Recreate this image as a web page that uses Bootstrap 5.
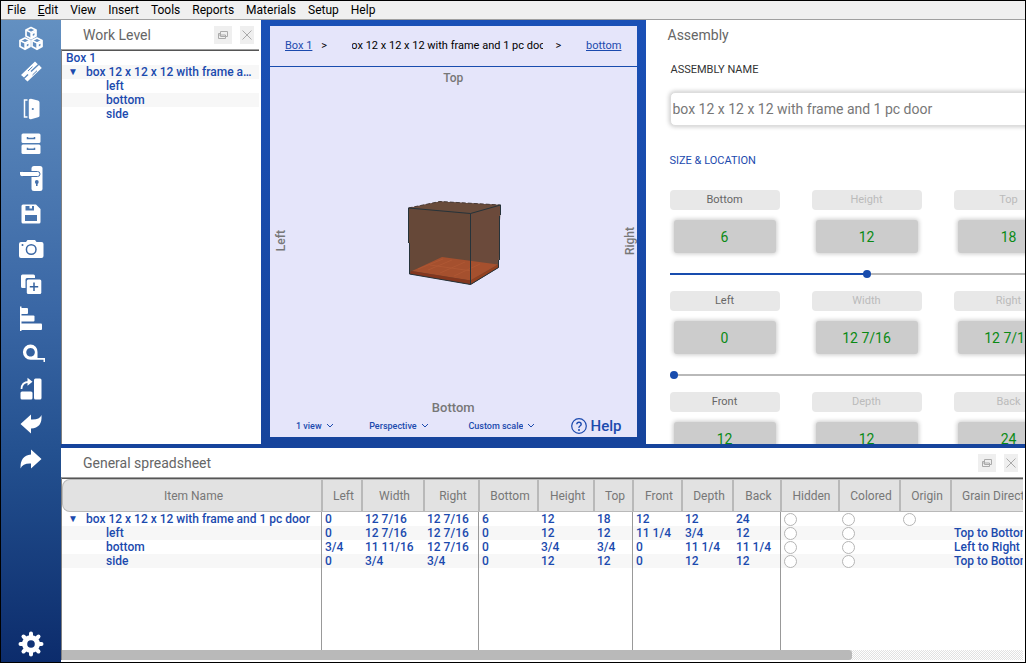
<!DOCTYPE html>
<html lang="en">
<head>
<meta charset="utf-8">
<meta name="viewport" content="width=device-width, initial-scale=1">
<title>Cabinet designer</title>
<link href="https://cdn.jsdelivr.net/npm/bootstrap@5.3.0/dist/css/bootstrap.min.css" rel="stylesheet">
<script src="https://cdn.jsdelivr.net/npm/bootstrap@5.3.0/dist/js/bootstrap.bundle.min.js" defer></script>
<style>
:root{--blue:#184cae;--ink:#1b4aae;--lav:#e5e5fa}
body{font-family:Roboto,"Liberation Sans",sans-serif;font-size:12px;line-height:14px;color:#000;border:1px solid #000;background:#fff}
button{border:0;padding:0;background:none}
.menubar{background:#f0f0f0;border-bottom:1px solid #a0a0a0;height:19px}
.menubar a{color:#000;text-decoration:none;padding:2px 6px}
.toolbar{width:60px;flex:none;background:linear-gradient(#6390c1,#3a67a5 45%,#23508f 68%,#0c2c6c);padding:0 1px 1px 0}
.toolbar button{height:35px}
.toolbar svg{width:24px;height:24px;overflow:visible;fill:#fff;display:block}
.upper{flex:1 1 0;min-height:0;border-bottom:4px solid #16449c}
.lower{flex:0 0 33.333%;min-height:0}
.panel-head{height:29px;padding:0 7px 0 22px;color:#666;flex:none}
.panel-head h2,.assembly h2{font-size:14px;line-height:18px;font-weight:400;margin:0;color:#666}
.panel-head button{background:#efefef;height:18px;color:#aaa}
.panel-head svg{fill:none;stroke:currentColor;display:block;margin:auto}
.bfloat{width:18px}.bclose{width:14px}
.sunken{border-top:1px solid #a0a0a0;border-left:1px solid #808080}
.sunken>div{border-top:1px solid #555}
.level{width:200px;flex:none}
.level .sunken{margin-right:2px}
.tree{color:var(--ink);font-weight:500;margin:0;padding:0;list-style:none}
.tree li{height:14px;padding-right:4px}
.tree li:nth-child(even){background:#f7f7f7}
.tree .d0{padding-left:4px}.d1{padding-left:24px!important}.d2{padding-left:44px!important}
.twist{color:var(--ink);font-size:10px;line-height:14px;width:10px;margin-left:-18px;margin-right:8px;display:inline-block;text-align:center;vertical-align:top}
.view{flex:1 1 384px;background:linear-gradient(#1a50b6,#16449c);padding:6px 9px 7px;min-width:0}
.scene{background:var(--lav)}
.crumbs{height:41px;border-bottom:1px solid var(--blue);font-size:11px;padding:0 15px}
.crumbs a{color:var(--ink)}
.crumb-now{width:191px;overflow:hidden;white-space:nowrap;display:flex;justify-content:center}
.side-name{color:#777;font-weight:500;font-size:12px;text-align:center}
.side-name.foot{font-size:13px}
.turned{writing-mode:vertical-rl;transform:rotate(180deg)}
.view-tools{color:var(--ink);padding:0 15px 0 26px;height:22px}
.view-tools select{appearance:none;border:0;color:var(--ink);font-size:9px;line-height:14px;font-weight:500;padding:0 12px 0 0;background:url("data:image/svg+xml,%3Csvg xmlns='http://www.w3.org/2000/svg' width='8' height='8'%3E%3Cpath d='M1 2l3 3 3-3' fill='none' stroke='%231b4aae'/%3E%3C/svg%3E") no-repeat right 3px}
.help{font-size:15px;line-height:18px;font-weight:500;color:var(--ink)}
.assembly{flex:1 1 379px;padding:0 0 0 24px;min-width:0;overflow:hidden}
.assembly h2{margin:6px 0 0 -2px}
.fields{width:394px}
.cap{font-size:11px;line-height:14px;display:block;color:#333}
.cap.name{padding:19px 0 15px 1px}
.cap.size{color:var(--ink);margin:28px 0 22px}
.name-box{width:100%;height:34px;border:1px solid #ddd;border-radius:5px;box-shadow:0 0 4px 1px #ccc;font-size:14px;color:#777;padding:0 2px;display:block}
.trio{display:grid;grid-template-columns:repeat(3,110px);gap:10px 32px}
.trio label{background:#e8e8e8;border-radius:4px;height:20px;line-height:20px;font-size:11px;text-align:center;color:#666}
.trio label.off{color:#bbb}
.trio input{width:102px;height:33px;margin:0 4px;border:0;border-radius:3px;background:#ccc;box-shadow:0 0 4px 1px #ccc;text-align:center;color:#0a8a14;font-size:14px;padding:0}
.slide{appearance:none;display:block;width:100%;height:8px;margin:17px 0 13px;background:linear-gradient(var(--blue),var(--blue)) left center/var(--at) 2px no-repeat,linear-gradient(#b9b9b9,#b9b9b9) center/100% 2px no-repeat}
.slide::-webkit-slider-thumb{appearance:none;width:8px;height:8px;border-radius:50%;background:var(--blue)}
.lower .sunken{margin:0 2px 2px 0}
.sheet-wrap{overflow:hidden}
.sheet{table-layout:fixed;width:1013px;height:100%;border-collapse:separate;border-spacing:0}
.sheet th{height:33px;background:#e2e2e2;border:solid #b9b9b9;border-width:1px 2px 1px 0;font-weight:400;color:#777;text-align:center;padding:0 0 0 3px;white-space:nowrap}
.sheet th:first-child{border-left-width:1px;border-radius:8px 0 0 8px}
.sheet th:last-child{text-align:left;padding-left:10px}
.sheet td{height:14px;padding:0 0 0 2px;color:var(--ink);font-weight:500;white-space:nowrap;vertical-align:top;overflow:hidden}
.sheet tbody tr:nth-child(even) td{background:#f7f7f7}
.sheet tbody tr.rest td{height:auto;background:none}
.sheet td:nth-child(1),.sheet td:nth-child(4),.sheet td:nth-child(7),.sheet td:nth-child(10){background-image:linear-gradient(#999,#999)!important;background-size:1px 100%!important;background-repeat:no-repeat!important;background-position:right 1px top!important}
.sheet td input{appearance:none;width:13px;height:13px;border:1px solid #b5b5b5;border-radius:50%;background:#fff;margin:1px 0 0;display:block}
.hbar{height:10px;background:repeating-conic-gradient(#e2e2e2 0 25%,#fff 0 50%) 0 0/2px 2px}
.hbar div{height:10px;background:#b9b9b9;border-radius:0 3px 3px 0}
</style>
</head>
<body class="vh-100 d-flex flex-column overflow-hidden">
<nav class="menubar d-flex align-items-center flex-shrink-0" aria-label="Main">
<a href="#">File</a><a href="#"><u>E</u>dit</a><a href="#">View</a><a href="#">Insert</a><a href="#">Tools</a><a href="#">Reports</a><a href="#">Materials</a><a href="#">Setup</a><a href="#">Help</a>
</nav>
<div class="d-flex flex-grow-1 overflow-hidden">
<aside class="toolbar d-flex flex-column">
<button class="d-flex justify-content-center align-items-center" aria-label="Assemblies"><svg viewBox="0 0 24 24"><defs><g id="cube"><path d="M0-5.5 5-3V3L0 5.8-5 3V-3Z" fill="none" stroke="#fff" stroke-width="1.7" stroke-linejoin="round"/><path d="M-5-3 0-.6 5-3M0-.6V5" fill="none" stroke="#fff" stroke-width="1.4"/><path d="M0 0 5-2.500V2.500L0 5.500Z"/><path d="M1.800 1 3.500 .2V2L1.800 3Z" fill="#5f8cbf"/></g></defs><use href="#cube" x="12" y="7"/><use href="#cube" x="6" y="17.5"/><use href="#cube" x="18" y="17.5"/></svg></button>
<button class="d-flex justify-content-center align-items-center" aria-label="Boards"><svg viewBox="0 0 24 24"><path d="M2 14 16 .5 18.800 3.200 11.500 10 12.500 11 20 4 22.800 7 8.500 20.500 5.500 17.800 9.500 14 8.500 13 5 16.500Z"/><path d="M9 10 13.500 5.700M13.500 14 18 9.700" stroke="#5684b9" stroke-width="1"/></svg></button>
<button class="d-flex justify-content-center align-items-center" aria-label="Doors"><svg viewBox="0 0 24 24"><path d="M8.500 4H5.500V21H8.500" fill="none" stroke="#fff" stroke-width="1.500"/><path d="M9.800 4.200Q10 2.800 12 2.800L19 4.600Q20.500 5 20.500 6.500V20Q20.500 21 19 21.300L12 23.200Q9.800 23.600 9.800 21.500Z"/><circle cx="13.800" cy="13" r="1.100" fill="#4f7db5"/></svg></button>
<button class="d-flex justify-content-center align-items-center" aria-label="Drawers"><svg viewBox="0 0 24 24"><rect x="2.500" y="2.500" width="19" height="9.500" rx="1.500"/><rect x="2.500" y="13.500" width="19" height="9.500" rx="1.500"/><path d="M8.500 6V7.500H15.500V6M8.500 16.800V18.300H15.500V16.800" fill="none" stroke="#4b78b0" stroke-width="1.500"/></svg></button>
<button class="d-flex justify-content-center align-items-center" aria-label="Hardware"><svg viewBox="0 0 24 24"><rect x="12.500" y="0" width="11" height="25" rx="2.500"/><rect x="1" y="5.500" width="20" height="5" rx="2.500" stroke="#4470ab" stroke-width="1"/><path d="M1 6H14V10H3Q1 10 1 8Z"/><circle cx="17.800" cy="16" r="1.900" fill="#4470ab"/><path d="M17 16H18.600V20H17Z" fill="#4470ab"/></svg></button>
<button class="d-flex justify-content-center align-items-center" aria-label="Save"><svg viewBox="0 0 24 24"><path fill-rule="evenodd" d="M4 3.500H17L21.500 8V21Q21.500 22.500 20 22.500H4Q2.500 22.500 2.500 21V5Q2.500 3.500 4 3.500ZM6.500 5V9.500H15V5H13V7.500H10.500V5ZM6 14V20H18V14Z"/></svg></button>
<button class="d-flex justify-content-center align-items-center" aria-label="Camera"><svg viewBox="0 0 24 24"><path d="M7 6 8.500 4H16L17.500 6H22.500Q24.500 6 24.500 8V20Q24.500 22 22.500 22H2Q0 22 0 20V8Q0 6 2 6Z"/><circle cx="12.200" cy="13.500" r="4.800" fill="none" stroke="#3b68a5" stroke-width="1.500"/><circle cx="3.500" cy="9" r="1" fill="#3b68a5"/></svg></button>
<button class="d-flex justify-content-center align-items-center" aria-label="Copy"><svg viewBox="0 0 24 24"><path d="M3.500 3.500H14.500Q16 3.500 16 5V7H8Q6.500 7 6.500 8.500V17H3.500Q2 17 2 15.500V5Q2 3.500 3.500 3.500Z"/><rect x="7.800" y="8.500" width="14.500" height="14.500" rx="1.500"/><path d="M15 11.500V20M10.800 15.800H19.200" stroke="#35629f" stroke-width="1.500"/></svg></button>
<button class="d-flex justify-content-center align-items-center" aria-label="Align"><svg viewBox="0 0 24 24"><path d="M1 .5H2.500V25H1Z"/><rect x="1.500" y="2" width="7.500" height="6" rx="1"/><rect x="1.500" y="9.500" width="14" height="6" rx="1"/><rect x="1.500" y="17.500" width="21.500" height="6.500" rx="1"/></svg></button>
<button class="d-flex justify-content-center align-items-center" aria-label="Measure"><svg viewBox="0 0 24 24"><path fill-rule="evenodd" d="M11.500 3.500A7 7 0 0 1 18.500 11V17H26V21H24.500V18.700H11.500A7.500 7.500 0 0 1 11.500 3.500ZM11.500 7A4.300 4.300 0 1 0 11.600 7Z"/></svg></button>
<button class="d-flex justify-content-center align-items-center" aria-label="Rotate"><svg viewBox="0 0 24 24"><rect x="15" y="2.500" width="7.500" height="21" rx="1.500"/><rect x="1.500" y="15.500" width="12" height="8" rx="1.500"/><path d="M2.500 13Q2.500 6 10 5.800" fill="none" stroke="#fff" stroke-width="1.700"/><path d="M8.500 1.800 13.500 5.800 8.500 9.800Z"/></svg></button>
<button class="d-flex justify-content-center align-items-center" aria-label="Undo"><svg viewBox="0 0 24 24"><path d="M1.500 13 12 3.500V8.500Q20.500 9 22.500 4Q23.500 17 12 17.500V22.500Z"/></svg></button>
<button class="d-flex justify-content-center align-items-center" aria-label="Redo"><svg viewBox="0 0 24 24"><path d="M22.500 13 12 3.500V8.500Q1 9.500 1.500 22.500Q4 17 12 17.500V22.500Z"/></svg></button>
<button class="d-flex justify-content-center align-items-center mt-auto" aria-label="Settings"><svg viewBox="-12 -12 24 24"><circle r="9"/><path d="M0-10.500V10.500M-10.500 0H10.500M-7.500-7.500 7.500 7.500M-7.500 7.500 7.500-7.500" stroke="#fff" stroke-width="4" stroke-linecap="round"/><circle r="3.800" fill="#113377"/></svg></button>
</aside>
<main class="d-flex flex-column flex-grow-1 overflow-hidden">
<div class="upper d-flex">
<section class="level d-flex flex-column">
<div class="panel-head d-flex align-items-center"><h2 class="me-auto">Work Level</h2>
<button class="bfloat me-2" aria-label="Float panel"><svg width="10" height="8"><path d="M2.500.5H9.500V5.500H2.500ZM2.500 2.500H.5V7.500H7.500V5.500M.5 4H7.500V5.500"/></svg></button><button class="bclose" aria-label="Close panel"><svg width="10" height="10"><path d="M.5.5 9.500 9.500M9.500.5.5 9.500"/></svg></button></div>
<div class="sunken flex-grow-1"><div>
<ul class="tree"><li class="d0">Box 1</li><li class="d1 text-truncate"><span class="twist">▼</span>box 12 x 12 x 12 with frame and 1 pc door</li><li class="d2">left</li><li class="d2">bottom</li><li class="d2">side</li></ul>
</div></div>
</section>
<section class="view d-flex">
<div class="scene d-flex flex-column flex-grow-1 overflow-hidden">
<div class="crumbs d-flex align-items-center justify-content-between flex-shrink-0"><a href="#">Box 1</a><span>&gt;</span><span class="crumb-now ms-3 me-1"><span>box 12 x 12 x 12 with frame and 1 pc door</span></span><span>&gt;</span><a href="#" class="ms-3">bottom</a></div>
<div class="side-name pt-1">Top</div>
<div class="d-flex flex-grow-1 align-items-center justify-content-between ps-1">
<div class="side-name turned pt-1">Left</div>
<svg width="94" height="88" viewBox="406 201 94 88" role="img" aria-label="Box model">
<path d="M406.500 210 438 203.500 498.500 207 496.500 269.500 468.500 286.500 407.500 276Z" fill="#664838"/>
<path d="M406.500 210 438 203.500 498.500 207 468.500 215.500Z" fill="#694b3b"/>
<path d="M469 215.500 498.500 207 496.500 269.500 469 286.500Z" fill="#6b4a3b"/>
<path d="M410 273 440 259 496 266.500 468.500 282.500Z" fill="#a5502e"/>
<path d="M416 271 441 261M426 272 450 262M438 275 463 264M452 278 478 266M428 267 470 273" stroke="#b55c37" stroke-width="1" opacity=".6"/>
<path d="M409 273 468.500 282.500V286.500L408 276Z" fill="#84371e"/><path d="M468.500 282.500 496.500 266.500V269.500L468.500 286.500Z" fill="#93401f"/>
<path d="M406.500 210 438 203.500 498.500 207" fill="none" stroke="#493c38" stroke-dasharray="4 2"/>
<path d="M406.500 210 468.500 215.500 498.500 207V217M468.500 215.500V286.500M406.500 210V245M407.500 245V276L468.500 286.500 496.500 269.500V262M497.500 218V262" fill="none" stroke="#26333a"/>
</svg>
<div class="side-name turned pt-1">Right</div>
</div>
<div class="side-name foot">Bottom</div>
<div class="view-tools d-flex align-items-center justify-content-between flex-shrink-0">
<select aria-label="Views"><option>1 view</option></select><select aria-label="Projection"><option>Perspective</option></select><select class="ms-1" aria-label="Scale"><option>Custom scale</option></select>
<button class="help d-flex align-items-center"><svg class="me-1" width="16" height="16"><circle cx="8" cy="8" r="7.300" fill="none" stroke="#1b4aae" stroke-width="1.200"/><path d="M5.800 6.300Q5.900 4.200 8 4.200T10.200 6.200Q10.200 7.200 9 8T8 9.800" fill="none" stroke="#1b4aae" stroke-width="1.400"/><circle cx="8" cy="12" r="1" fill="#1b4aae"/></svg>Help</button>
</div>
</div>
</section>
<section class="assembly"><h2>Assembly</h2>
<div class="fields">
<label class="cap name" for="nm">ASSEMBLY NAME</label>
<input id="nm" class="name-box" value="box 12 x 12 x 12 with frame and 1 pc door">
<div class="cap size">SIZE &amp; LOCATION</div>
<div class="trio"><label for="a1">Bottom</label><label class="off" for="a2">Height</label><label class="off" for="a3">Top</label><input id="a1" value="6"><input id="a2" value="12"><input id="a3" value="18"></div>
<input class="slide" type="range" min="0" max="24" value="12" aria-label="Vertical position" style="--at:50%">
<div class="trio"><label for="b1">Left</label><label class="off" for="b2">Width</label><label class="off" for="b3">Right</label><input id="b1" value="0"><input id="b2" value="12 7/16"><input id="b3" value="12 7/16"></div>
<input class="slide" type="range" min="0" max="24" value="0" aria-label="Horizontal position" style="--at:0%">
<div class="trio"><label for="c1">Front</label><label class="off" for="c2">Depth</label><label class="off" for="c3">Back</label><input id="c1" value="12"><input id="c2" value="12"><input id="c3" value="24"></div>
</div>
</section>
</div>
<section class="lower d-flex flex-column bg-white">
<div class="panel-head d-flex align-items-center"><h2 class="me-auto">General spreadsheet</h2>
<button class="bfloat me-2" aria-label="Float panel"><svg width="10" height="8"><path d="M2.500.5H9.500V5.500H2.500ZM2.500 2.500H.5V7.500H7.500V5.500M.5 4H7.500V5.500"/></svg></button><button class="bclose" aria-label="Close panel"><svg width="10" height="10"><path d="M.5.5 9.500 9.500M9.500.5.5 9.500"/></svg></button></div>
<div class="sunken flex-grow-1 d-flex flex-column overflow-hidden">
<div class="sheet-wrap flex-grow-1">
<table class="sheet">
<colgroup><col style="width:261px"><col style="width:40px"><col style="width:62px"><col style="width:55px"><col style="width:59px"><col style="width:56px"><col style="width:39px"><col style="width:49px"><col style="width:51px"><col style="width:48px"><col style="width:58px"><col style="width:61px"><col style="width:51px"><col style="width:123px"></colgroup>
<thead><tr><th>Item Name</th><th>Left</th><th>Width</th><th>Right</th><th>Bottom</th><th>Height</th><th>Top</th><th>Front</th><th>Depth</th><th>Back</th><th>Hidden</th><th>Colored</th><th>Origin</th><th>Grain Direction</th></tr></thead>
<tbody>
<tr><td class="d1"><span class="twist">▼</span>box 12 x 12 x 12 with frame and 1 pc door</td><td>0</td><td>12 7/16</td><td>12 7/16</td><td>6</td><td>12</td><td>18</td><td>12</td><td>12</td><td>24</td><td><input type="checkbox" aria-label="Hidden, box"></td><td><input type="checkbox" aria-label="Colored, box"></td><td><input type="checkbox" aria-label="Origin, box"></td><td></td></tr>
<tr><td class="d2">left</td><td>0</td><td>12 7/16</td><td>12 7/16</td><td>0</td><td>12</td><td>12</td><td>11 1/4</td><td>3/4</td><td>12</td><td><input type="checkbox" aria-label="Hidden, left"></td><td><input type="checkbox" aria-label="Colored, left"></td><td></td><td>Top to Bottom</td></tr>
<tr><td class="d2">bottom</td><td>3/4</td><td>11 11/16</td><td>12 7/16</td><td>0</td><td>3/4</td><td>3/4</td><td>0</td><td>11 1/4</td><td>11 1/4</td><td><input type="checkbox" aria-label="Hidden, bottom"></td><td><input type="checkbox" aria-label="Colored, bottom"></td><td></td><td>Left to Right</td></tr>
<tr><td class="d2">side</td><td>0</td><td>3/4</td><td>3/4</td><td>0</td><td>12</td><td>12</td><td>0</td><td>12</td><td>12</td><td><input type="checkbox" aria-label="Hidden, side"></td><td><input type="checkbox" aria-label="Colored, side"></td><td></td><td>Top to Bottom</td></tr>
<tr class="rest"><td></td><td></td><td></td><td></td><td></td><td></td><td></td><td></td><td></td><td></td><td></td><td></td><td></td><td></td></tr>
</tbody></table>
</div>
<div class="hbar border-0"><div style="width:82.2%"></div></div>
</div>
</section>
</main>
</div>
</body>
</html>
